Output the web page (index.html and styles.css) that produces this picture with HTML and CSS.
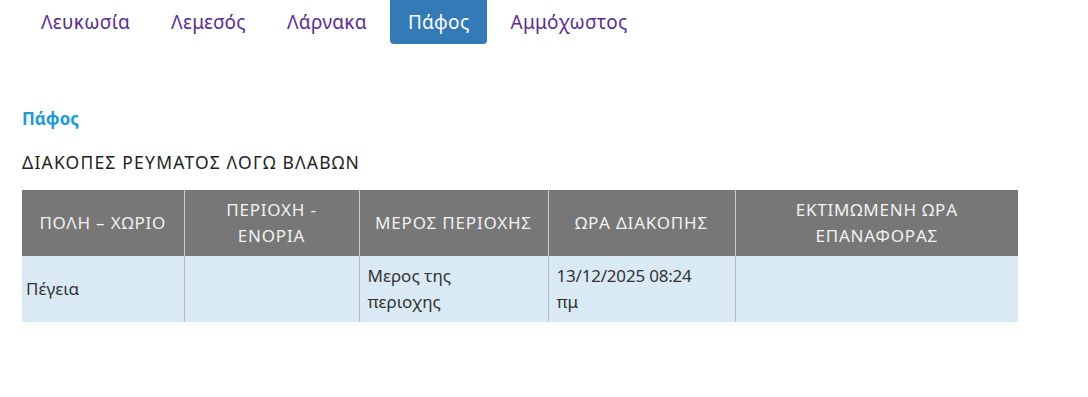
FILE: index.html
```html
<!DOCTYPE html>
<html lang="el">
<head>
<meta charset="utf-8">
<title>Διακοπές ρεύματος</title>
<link rel="stylesheet" href="styles.css">
</head>
<body>
<div class="page">
  <ul class="tabs">
    <li class="tab">Λευκωσία</li>
    <li class="tab">Λεμεσός</li>
    <li class="tab">Λάρνακα</li>
    <li class="tab active">Πάφος</li>
    <li class="tab">Αμμόχωστος</li>
  </ul>
  <h3 class="district">Πάφος</h3>
  <p class="subtitle">ΔΙΑΚΟΠΕΣ ΡΕΥΜΑΤΟΣ ΛΟΓΩ ΒΛΑΒΩΝ</p>
  <table class="outages">
    <colgroup>
      <col class="c1"><col class="c2"><col class="c3"><col class="c4"><col class="c5">
    </colgroup>
    <thead>
      <tr>
        <th>ΠΟΛΗ – ΧΩΡΙΟ</th>
        <th>ΠΕΡΙΟΧΗ - ΕΝΟΡΙΑ</th>
        <th>ΜΕΡΟΣ ΠΕΡΙΟΧΗΣ</th>
        <th>ΩΡΑ ΔΙΑΚΟΠΗΣ</th>
        <th>ΕΚΤΙΜΩΜΕΝΗ ΩΡΑ ΕΠΑΝΑΦΟΡΑΣ</th>
      </tr>
    </thead>
    <tbody>
      <tr>
        <td>Πέγεια</td>
        <td></td>
        <td>Μερος της περιοχης</td>
        <td><span class="num">13/12/2025 08:24</span> πμ</td>
        <td></td>
      </tr>
    </tbody>
  </table>
</div>
</body>
</html>
```
FILE: styles.css
```css
html, body {
  margin: 0;
  padding: 0;
  background: #fff;
}
body {
  font-family: "Noto Sans", "DejaVu Sans", sans-serif;
  color: #333;
}
.page {
  padding: 0 22px;
}
.tabs {
  list-style: none;
  margin: 0;
  padding: 0;
  display: flex;
  gap: 5px;
  margin-left: 1px;
}
.tab {
  font-size: 19px;
  letter-spacing: 0.3px;
  line-height: 24px;
  padding: 10px 18px;
  color: #5c2d91;
  border-radius: 0 0 4px 4px;
}
.tab.active {
  background: #337ab7;
  color: #fff;
}
.district {
  margin: 63px 0 0;
  font-size: 17px;
  line-height: 24px;
  font-weight: bold;
  color: #1e9ad6;
}
.subtitle {
  margin: 19px 0 0;
  font-size: 17.5px;
  letter-spacing: 1.2px;
  line-height: 24px;
  color: #222;
}
.outages {
  margin-top: 16px;
  border-collapse: collapse;
  table-layout: fixed;
  width: 996px;
  font-size: 17px;
  line-height: 26px;
}
.c1 { width: 162px; }
.c2 { width: 175px; }
.c3 { width: 189px; }
.c4 { width: 187px; }
.c5 { width: 283px; }
.outages th {
  background: #777;
  color: #f2f2f2;
  font-weight: normal;
  letter-spacing: 0.8px;
  text-align: center;
  padding: 7px 14px;
  border-left: 1px solid #ccc;
  height: 52px;
}
.outages td {
  background: #d9eaf5;
  padding: 7px 8px 7px 4px;
  border-left: 1px solid #bbb;
  height: 52px;
}
.outages td:nth-child(3),
.outages td:nth-child(4) {
  padding-left: 8px;
  padding-right: 20px;
}
.num {
  white-space: nowrap;
  letter-spacing: -0.2px;
}
.outages th:first-child,
.outages td:first-child {
  border-left: none;
}
```
